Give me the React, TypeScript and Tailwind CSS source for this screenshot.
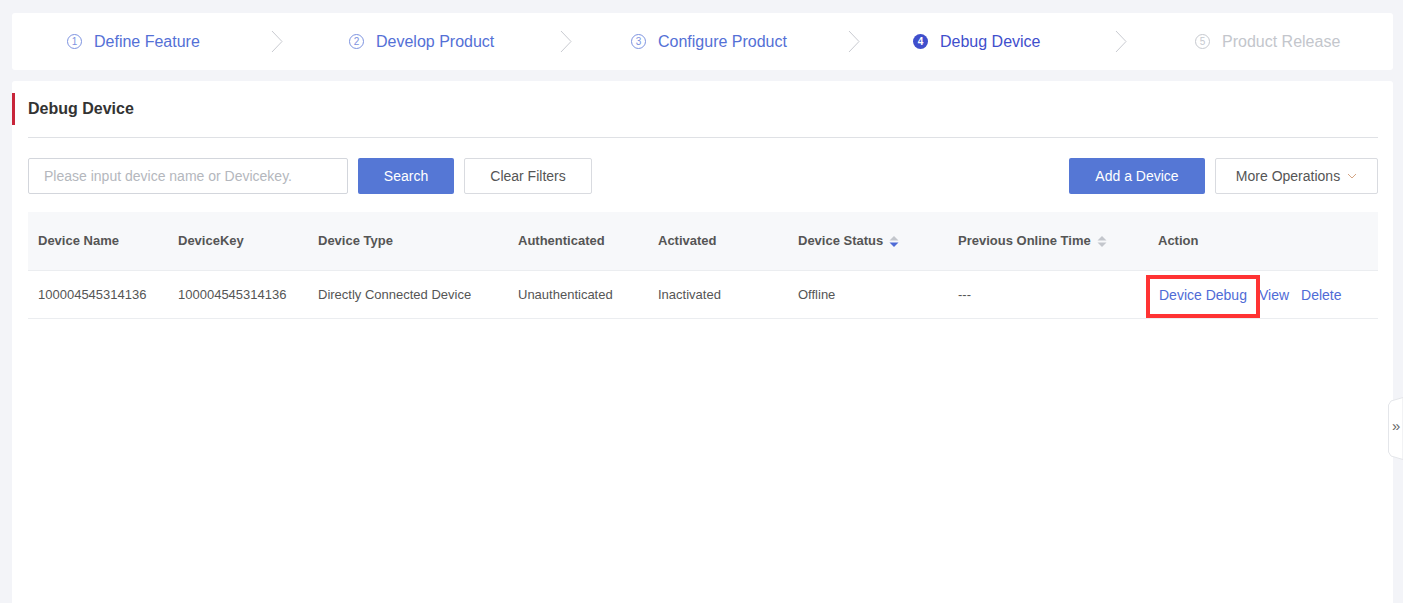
import React from "react";

const font = { fontFamily: '"Liberation Sans", Arial, sans-serif' };

function Chevron() {
  return (
    <svg width="12" height="23" viewBox="0 0 12 23" className="shrink-0">
      <polyline points="1,1 11,11.5 1,22" fill="none" stroke="#c9cbd1" strokeWidth="1" />
    </svg>
  );
}

function Circle({ n, state }: { n: number; state: "done" | "active" | "todo" }) {
  if (state === "active") {
    return (
      <span className="flex h-[15px] w-[15px] items-center justify-center rounded-full bg-[#3f4fcc] text-[10px] font-bold leading-none text-white">
        {n}
      </span>
    );
  }
  return (
    <span
      className={
        state === "done"
          ? "flex h-[15px] w-[15px] items-center justify-center rounded-full border border-[#7d93e0] text-[10px] leading-none text-[#7d93e0]"
          : "flex h-[15px] w-[15px] items-center justify-center rounded-full border border-[#c6c9cf] text-[10px] leading-none text-[#c6c9cf]"
      }
    >
      {n}
    </span>
  );
}

function SortIcon({ active }: { active?: boolean }) {
  return (
    <svg width="10" height="13" viewBox="0 0 10 13" className="ml-[6px]">
      <polygon points="5,1 9.5,5.5 0.5,5.5" fill="#c3c6cc" />
      <polygon points="0.5,7.5 9.5,7.5 5,12" fill={active ? "#4f6bd6" : "#c3c6cc"} />
    </svg>
  );
}

export default function App() {
  const steps: { n: number; label: string; state: "done" | "active" | "todo"; gap: number }[] = [
    { n: 1, label: "Define Feature", state: "done", gap: 71 },
    { n: 2, label: "Develop Product", state: "done", gap: 66 },
    { n: 3, label: "Configure Product", state: "done", gap: 61 },
    { n: 4, label: "Debug Device", state: "active", gap: 74 },
    { n: 5, label: "Product Release", state: "todo", gap: 0 },
  ];
  const cols = [140, 140, 200, 140, 140, 160, 200, 230];
  return (
    <div className="relative min-h-[603px] w-full overflow-hidden bg-[#f3f4f8] pl-[12px] pr-[10px] pt-[13px] text-[#555]" style={font}>
      {/* steps */}
      <div className="flex h-[57px] items-center rounded-[3px] bg-white pl-[55px]">
        {steps.map((s) => (
          <div key={s.n} className="flex w-[282px] shrink-0 items-center">
            <Circle n={s.n} state={s.state} />
            <span
              className={
                s.state === "active"
                  ? "ml-[12px] text-[16px] text-[#3f4fcc]"
                  : s.state === "done"
                  ? "ml-[12px] text-[16px] text-[#5470d6]"
                  : "ml-[12px] text-[16px] text-[#c3c6cc]"
              }
            >
              {s.label}
            </span>
            {s.gap > 0 && (
              <span style={{ marginLeft: s.gap }} className="flex">
                <Chevron />
              </span>
            )}
          </div>
        ))}
      </div>

      {/* main card */}
      <div className="mt-[11px] min-h-[540px] rounded-[3px] bg-white pl-[16px] pr-[15px] pt-[12px]">
        <div className="relative flex h-[32px] items-center">
          <div className="absolute left-[-16px] top-0 h-[32px] w-[3px] bg-[#c8253a]" />
          <span className="text-[16px] font-bold text-[#333]">Debug Device</span>
        </div>
        <div className="mt-[12px] h-px bg-[#dfe1e5]" />

        <div className="mt-[20px] flex items-center">
          <div className="flex h-[36px] w-[320px] items-center rounded-[2px] border border-[#d3d6dc] px-[15px] text-[14px] text-[#b4b7bd]">
            Please input device name or Devicekey.
          </div>
          <button className="ml-[10px] h-[36px] w-[96px] rounded-[2px] bg-[#5577d5] text-[14px] text-white">Search</button>
          <button className="ml-[10px] h-[36px] w-[128px] rounded-[2px] border border-[#d9dbe0] bg-white text-[14px] text-[#555]">
            Clear Filters
          </button>
          <div className="flex-1" />
          <button className="h-[36px] w-[136px] rounded-[2px] bg-[#5577d5] text-[14px] text-white">Add a Device</button>
          <button className="ml-[10px] flex h-[36px] w-[163px] items-center justify-center rounded-[2px] border border-[#d9dbe0] bg-white text-[14px] text-[#555]">
            More Operations
            <svg width="10" height="6" viewBox="0 0 10 6" className="ml-[7px]">
              <polyline points="1,1 5,5 9,1" fill="none" stroke="#d4a584" strokeWidth="1" />
            </svg>
          </button>
        </div>

        {/* table */}
        <div className="mt-[18px] text-[13px]">
          <div className="flex h-[58px] items-center bg-[#f7f8fa] font-bold text-[#555]">
            {["Device Name", "DeviceKey", "Device Type", "Authenticated", "Activated", "Device Status", "Previous Online Time", "Action"].map(
              (h, i) => (
                <div key={h} className="flex shrink-0 items-center pl-[10px]" style={{ width: cols[i] }}>
                  {h}
                  {i === 5 && <SortIcon active />}
                  {i === 6 && <SortIcon />}
                </div>
              )
            )}
          </div>
          <div className="flex h-[49px] items-center border-y border-[#ebedf0] text-[#555]">
            {["100004545314136", "100004545314136", "Directly Connected Device", "Unauthenticated", "Inactivated", "Offline", "---"].map(
              (c, i) => (
                <div key={i} className="shrink-0 pl-[10px]" style={{ width: cols[i] }}>
                  {c}
                </div>
              )
            )}
            <div className="flex shrink-0 items-center pl-[11px] text-[14px] leading-[20px] text-[#4f6bd6]" style={{ width: cols[7] }}>
              <span className="relative">
                Device Debug
                <span className="absolute left-[-13px] top-[-10px] h-[43px] w-[114px] border-[4px] border-[#ff3333]" />
              </span>
              <span className="ml-[12px]">View</span>
              <span className="ml-[12px]">Delete</span>
            </div>
          </div>
        </div>
      </div>

      {/* side handle */}
      <div className="absolute right-0 top-[397px] h-[63px] w-[15px]">
        <svg width="15" height="63" viewBox="0 0 15 63" className="absolute inset-0">
          <polygon points="15,0.5 3,4 0.5,8 0.5,55 3,59 15,62.5" fill="#ffffff" stroke="#e4e6ea" strokeWidth="1" />
        </svg>
        <span className="absolute left-[4px] top-[21px] text-[15px] leading-none text-[#666]">»</span>
      </div>
    </div>
  );
}
